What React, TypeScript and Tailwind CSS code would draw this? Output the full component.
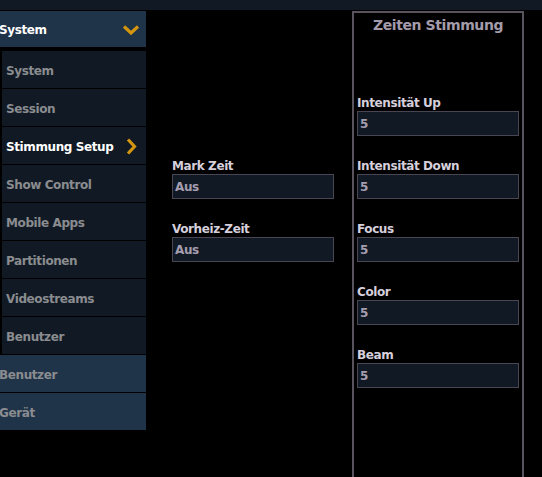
import { ReactNode } from 'react'

const font = { fontFamily: '"DejaVu Sans", Verdana, sans-serif' }

const subItems = [
  'System',
  'Session',
  'Stimmung Setup',
  'Show Control',
  'Mobile Apps',
  'Partitionen',
  'Videostreams',
  'Benutzer',
]

function ChevronDown() {
  return (
    <svg width="18" height="10" viewBox="0 0 18 10" className="shrink-0">
      <path d="M2 1.5 L9 8 L16 1.5" fill="none" stroke="#d4950f" strokeWidth="3.2" strokeLinejoin="miter" />
    </svg>
  )
}

function ChevronRight() {
  return (
    <svg width="11" height="17" viewBox="0 0 11 17" className="shrink-0">
      <path d="M2 1.5 L8.5 8.5 L2 15.5" fill="none" stroke="#d4950f" strokeWidth="3.2" />
    </svg>
  )
}

function Field({ label, value }: { label: string; value: string }) {
  return (
    <div className="flex flex-col">
      <span className="h-[16px] text-[12px] leading-[16px] font-bold tracking-[-0.4px] text-[#d6cfdc]">
        {label}
      </span>
      <div className="flex h-[25px] w-[162px] items-center border border-[#4a4552] bg-[#111a24] px-[2px] text-[12px] font-bold tracking-[-0.4px] text-[#a59db0]">
        {value}
      </div>
    </div>
  )
}

function NavRow({ children, className }: { children: ReactNode; className: string }) {
  return <div className={`flex h-[37px] items-center pt-[2px] ${className}`}>{children}</div>
}

export default function App() {
  return (
    <div className="h-[477px] w-[542px] overflow-hidden bg-black" style={font}>
      <div className="h-[10px] bg-[#111a24]" />
      <div className="mt-[1px] flex">
        {/* sidebar */}
        <div className="flex w-[146px] flex-col">
          <div className="flex h-[36px] items-center justify-between bg-[#1f3349] pt-[1px] pr-[6px] text-[12px] font-bold tracking-[-0.4px] text-white">
            <span className="-ml-[1px] pt-[1px]">System</span>
            <ChevronDown />
          </div>
          <div className="mt-[4px] flex flex-col gap-[1px] pl-[2px]">
            {subItems.map((item) => (
              <NavRow
                key={item}
                className={`justify-between bg-[#111a24] pr-[9px] pl-[4px] text-[12px] font-bold tracking-[-0.4px] ${
                  item === 'Stimmung Setup' ? 'text-white' : 'text-[#8a8c90]'
                }`}
              >
                <span>{item}</span>
                {item === 'Stimmung Setup' && <ChevronRight />}
              </NavRow>
            ))}
          </div>
          <div className="mt-[1px] flex flex-col gap-[1px]">
            <NavRow className="bg-[#1f3349] text-[12px] font-bold tracking-[-0.4px] text-[#8a8c90]">
              <span className="-ml-[1px]">Benutzer</span>
            </NavRow>
            <NavRow className="bg-[#1f3349] text-[12px] font-bold tracking-[-0.4px] text-[#8a8c90]">
              <span className="-ml-[1px]">Gerät</span>
            </NavRow>
          </div>
        </div>

        {/* middle column */}
        <div className="flex w-[206px] flex-col gap-[22px] pt-[147px] pl-[26px]">
          <Field label="Mark Zeit" value="Aus" />
          <Field label="Vorheiz-Zeit" value="Aus" />
        </div>

        {/* right panel */}
        <div className="h-[480px] w-[172px] border-2 border-[#58535c]">
          <div className="pt-[2px] text-center text-[14px] font-bold tracking-[-0.4px] text-[#a49cab]">
            Zeiten Stimmung
          </div>
          <div className="mt-[59px] flex flex-col gap-[22px] pl-[3px]">
            <Field label="Intensität Up" value="5" />
            <Field label="Intensität Down" value="5" />
            <Field label="Focus" value="5" />
            <Field label="Color" value="5" />
            <Field label="Beam" value="5" />
          </div>
        </div>
      </div>
    </div>
  )
}
